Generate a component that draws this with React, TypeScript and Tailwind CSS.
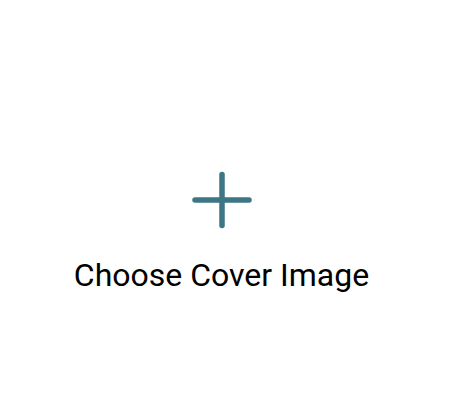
export default function App() {
  return (
    <div className="w-[451px] h-[409px] bg-white flex flex-col items-center pt-[171px] pr-[8px]" style={{ fontFamily: "Roboto, sans-serif" }}>
      <svg width="62" height="58" viewBox="0 0 62 58">
        <line x1="4" y1="29" x2="58" y2="29" stroke="#3d7685" strokeWidth="5.5" strokeLinecap="round" />
        <line x1="31" y1="3.5" x2="31" y2="54.5" stroke="#3d7685" strokeWidth="5.5" strokeLinecap="round" />
      </svg>
      <div className="mt-[27px] text-[32px] leading-[38px] text-black">Choose Cover Image</div>
    </div>
  );
}
